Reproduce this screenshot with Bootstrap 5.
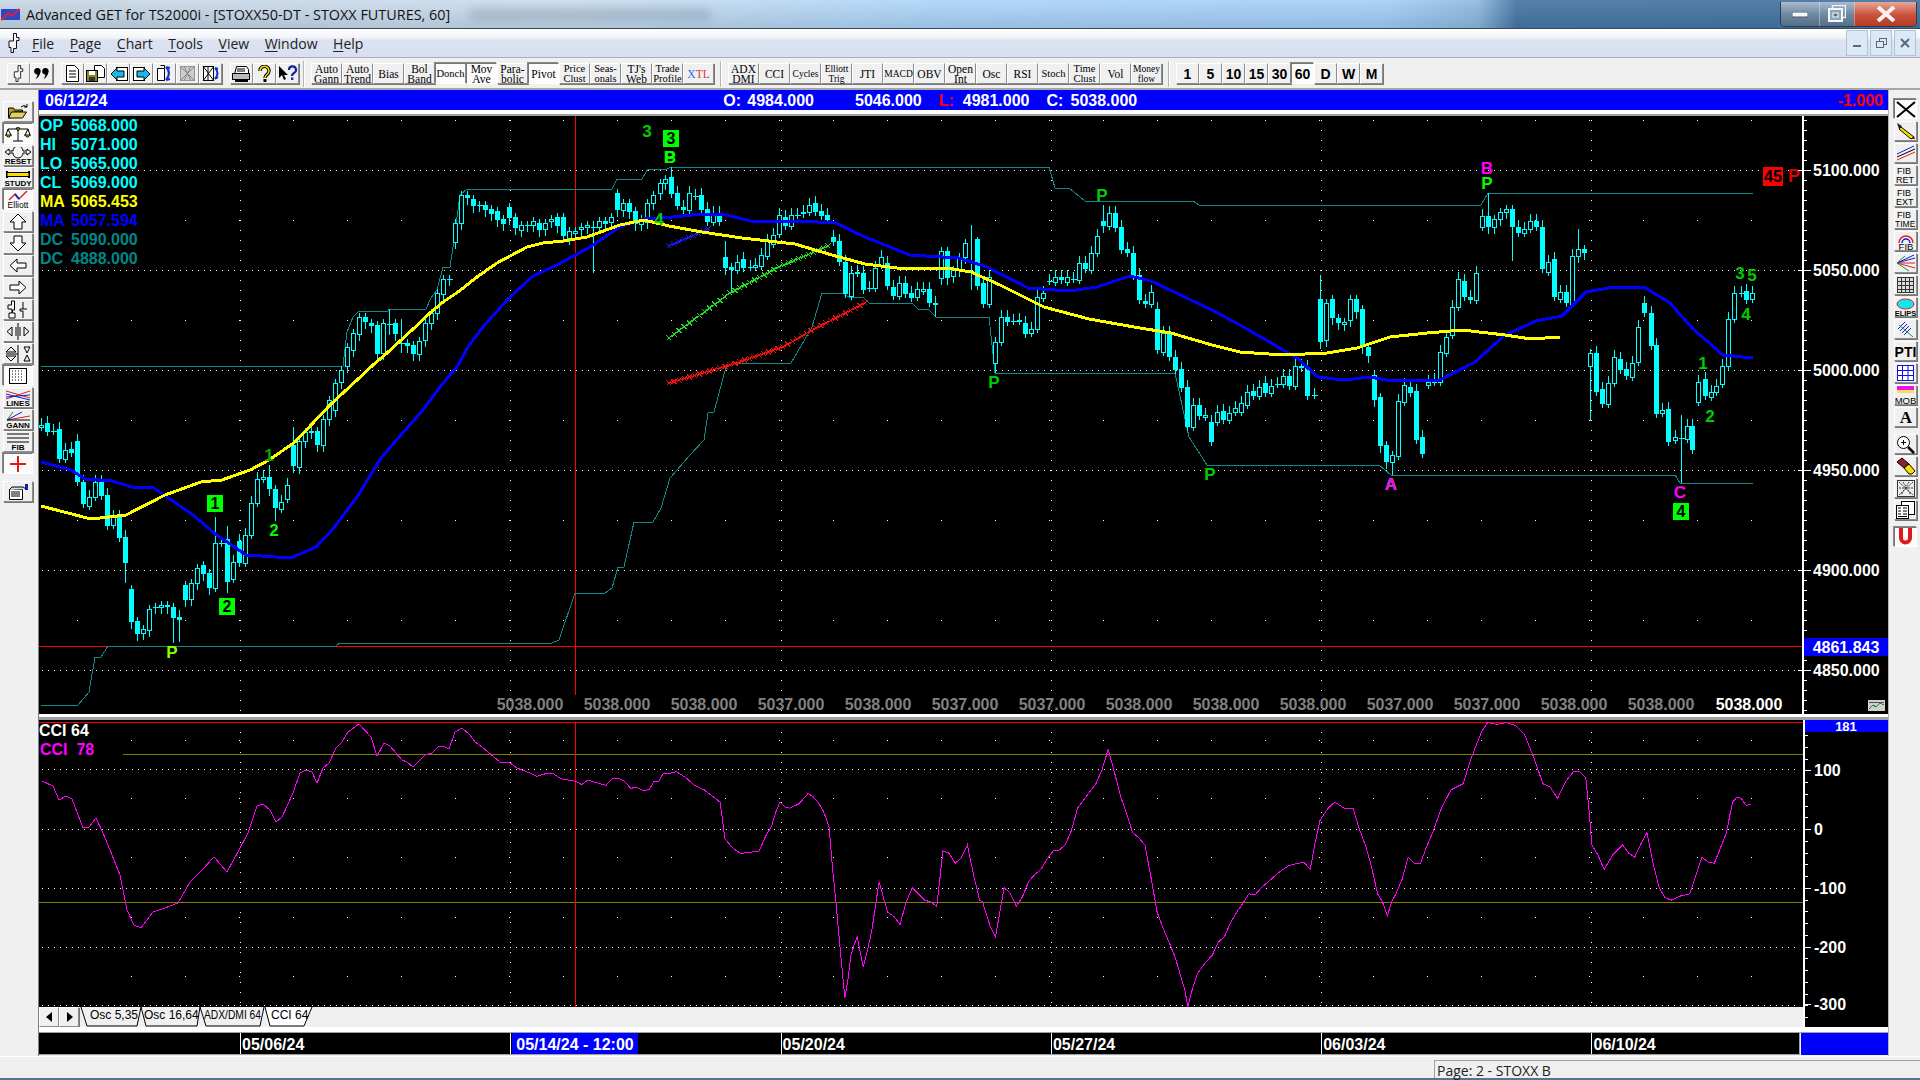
<!DOCTYPE html>
<html lang="en">
<head>
<meta charset="UTF-8">
<title>Advanced GET for TS2000i</title>
<link href="https://cdn.jsdelivr.net/npm/bootstrap@5.3.0/dist/css/bootstrap.min.css" rel="stylesheet">
<style>
  html, body { margin: 0; height: 100%; overflow: hidden; background: #f0f0f0; }
  .app { width: 1920px; height: 1080px; font-family: "Liberation Sans", Arial, sans-serif; overflow: hidden; }
  svg text { font-family: "Liberation Sans", Arial, sans-serif; font-weight: 700; }
  svg text.serif { font-family: "Liberation Serif", serif; }

  /* window title */
  .titlebar { height: 29px; border-bottom: 1px solid #3c4650; color: #111; font: 14.4px "Open Sans", sans-serif;
    background: linear-gradient(180deg, rgba(255,255,255,.12), rgba(60,90,120,.16)),
      linear-gradient(90deg, #c6d5e3 0, #c9dbeb 30%, #a9d2f8 50%, #a2cdf6 72%, #8ab5dc 77%, #3f6f9f 79%, #3c6c9c 100%); }
  .titlebar .logo { margin: 0 6px 0 1px; }
  .ghost { width: 240px; height: 11px; margin-left: 20px; background: rgba(70,90,110,.22); filter: blur(5px); }
  .winbtns { margin-right: 3px; height: 25px; border: 1px solid rgba(30,40,50,.7); border-top: 0; border-radius: 0 0 5px 5px; overflow: hidden; }
  .winbtns div { height: 100%; border-left: 1px solid rgba(255,255,255,.35); background: linear-gradient(180deg, #a9bccd, #6f8aa3 50%, #566f87); }
  .winbtns .b-min { width: 38px; border-left: 0; }
  .winbtns .b-max { width: 35px; }
  .winbtns .b-close { width: 62px; background: linear-gradient(180deg, #e9a795, #c9503a 55%, #b63b28); }

  /* menu */
  .menubar { height: 29px; border-bottom: 1px solid #a9adb8; background: linear-gradient(180deg, #fff 0, #f2f4f9 30%, #dde3f1 40%, #d8dff0 100%); }
  .menubar .nav-link { color: #222; padding: 0; margin-right: 15.5px; font: 14px "Open Sans", sans-serif; }
  .menubar u { text-underline-offset: 2px; }
  .mdi { width: 22px; height: 26px; margin-left: 2px; border: 1px solid #aec3d6; background: #dbe8f5; color: #4a5a6a; }

  /* toolbars */
  .toolbar { height: 32px; padding: 5px 0 0 7px; background: #f0f0f0; border-bottom: 2px solid #a6a6a6; }
  .btn.tb { padding: 0; border-radius: 0; color: #000; background: #f0f0f0; display: flex; align-items: center; justify-content: center;
    border: 1px solid; border-color: #fff #8c8c8c #8c8c8c #fff; box-shadow: 1px 1px 0 #777; }
  .btn.tb.on { background: #fbfbfb; border-color: #777 #fff #fff #777; box-shadow: -1px -1px 0 #888; }
  .tb-i { width: 23px; height: 21px; }
  .btn.tb-t { width: 31px; height: 21px; font: 11.5px/10.5px "Liberation Serif", serif; padding-top: 1px; }
  .btn.tb-t.small { font-size: 9.5px; }
  .btn.tb-t.mid { font-size: 10.500px; }
  .tb-n { width: 23px; height: 21px; font: 700 14px "Liberation Sans", sans-serif; }
  .tb-sep { width: 2px; height: 26px; margin: -2px 6px 0; border-left: 1px solid #b5b5b5; border-right: 1px solid #fff; }

  /* side bars */
  .main { height: 966px; }
  .side-l { width: 38px; padding: 11px 0 0 3px; }
  .side-l .tb { width: 30px; height: 21px; margin-bottom: 1px; }
  .side-r { width: 31px; padding: 9px 0 0 5px; }
  .side-r .tb { width: 23px; height: 20px; margin-bottom: 2px; }
  .side-l .mt-gap { margin-top: 6px; }
  .side-r .mt-gap { margin-top: 5px; }

  /* centre */
  .centre { width: 1851px; border-left: 1px solid #808080; border-right: 1px solid #b5b5b5; }
  .pricebar { height: 20px; background: #00f; color: #fff; font-weight: 700; font-size: 16px; line-height: 21px; padding: 0 5px 0 6px; }
  .pricebar .ohlc { margin-left: 616px; gap: 17px; }
  .pricebar .lab { display: inline-block; width: 24px; }
  .pricebar .lab-h { color: #00f; }
  .pricebar .lab-l, .pricebar .chg { color: #f00; }
  .sep-price { height: 6px; background: #fff; border-bottom: 2px solid #a0a0a0; }
  .sep-panel { height: 6px; background: #fff; border-bottom: 3px solid #a0a0a0; }
  .chart { display: block; background: #000; }
  .tabstrip { height: 20px; background: #f0f0f0; }
  .tabstrip .btn.tb { width: 20px; height: 20px; font-size: 9px; }
  .sep-dates { height: 6px; background: #fff; border-bottom: 1px solid #a0a0a0; }
  .dates { height: 22px; line-height: 24px; font-size: 16px; font-weight: 700; color: #fff; }
  .dates .track { width: 1761px; height: 22px; background: #000; border: 1px solid #a0a0a0; border-width: 0 1px 1px 0; padding-left: 201px; overflow: hidden; }
  .dates .cell { flex: 0 0 270.3px; border-left: 1px solid #fff; padding-left: 1px; }
  .dates .cell:last-child { flex: 1 1 0; }
  .dates .hl { background: #00f; padding: 0 4px; display: inline-block; height: 21px; line-height: 24px; }
  .dates .end { flex: 1; margin-left: 1px; background: #00f; }

  /* status */
  .statusbar { height: 24px; border-top: 1px solid #fff; border-bottom: 2px solid #55748f; }
  .statusbar .panel { margin: 3px 0 0 1434px; padding-left: 2px; flex: 1; border: 1px solid #a0a0a0; border-width: 1px 0 0 1px; font: 14px/20px "Open Sans", sans-serif; color: #222; }
</style>
</head>
<body>
<svg width="0" height="0" class="position-absolute">
  <symbol id="fork" viewBox="0 0 12 20"><path d="M5.5.5h3v4h2.5v3H8.500v8h-3v4H3v-5H1V8h4.500z" fill="#f4f4f4" stroke="#111"/></symbol>
</svg>
<div class="app d-flex flex-column">

  <!-- title -->
  <div class="titlebar d-flex align-items-center">
    <svg class="logo" width="19" height="15" viewBox="0 0 19 15"><rect y="2" width="19" height="11" fill="#2a48c8"/><path d="M0 13 7 6l4 3 7-7" fill="none" stroke="#e02030" stroke-width="2"/></svg>
    <span>Advanced GET for TS2000i - [STOXX50-DT - STOXX FUTURES, 60]</span>
    <div class="ghost"></div>
    <div class="winbtns d-flex ms-auto">
      <div class="b-min d-flex align-items-end justify-content-center pb-2"><svg width="16" height="6"><rect width="16" height="5" fill="#f4f6f8" stroke="#4a5a6a"/></svg></div>
      <div class="b-max d-flex align-items-center justify-content-center"><svg width="18" height="17"><rect x="4.500" y=".5" width="13" height="12" fill="none" stroke="#eef2f5" stroke-width="1.500"/><rect x="1" y="4" width="13" height="12" fill="#8ea4b8" stroke="#f4f6f8" stroke-width="2"/><rect x="5" y="8" width="5" height="4" fill="#5a7288" stroke="#fff"/></svg></div>
      <div class="b-close d-flex align-items-center justify-content-center"><svg width="20" height="16"><path d="M2 1l16 14M18 1 2 15" stroke="#f7f3f0" stroke-width="4"/></svg></div>
    </div>
  </div>

  <!-- menu -->
  <nav class="menubar d-flex align-items-center">
    <svg class="mx-2" width="12" height="20"><use href="#fork"/></svg>
    <ul class="nav ms-1">
      <li class="nav-item"><a class="nav-link" href="#"><u>F</u>ile</a></li>
      <li class="nav-item"><a class="nav-link" href="#"><u>P</u>age</a></li>
      <li class="nav-item"><a class="nav-link" href="#"><u>C</u>hart</a></li>
      <li class="nav-item"><a class="nav-link" href="#"><u>T</u>ools</a></li>
      <li class="nav-item"><a class="nav-link" href="#"><u>V</u>iew</a></li>
      <li class="nav-item"><a class="nav-link" href="#"><u>W</u>indow</a></li>
      <li class="nav-item"><a class="nav-link" href="#"><u>H</u>elp</a></li>
    </ul>
    <div class="d-flex ms-auto me-1 pe-0">
      <div class="mdi d-flex align-items-center justify-content-center"><svg width="9" height="9"><rect y="6" width="8" height="2" fill="#5a6a7a"/></svg></div>
      <div class="mdi d-flex align-items-center justify-content-center"><svg width="11" height="11"><rect x="3.500" y=".5" width="7" height="6" fill="none" stroke="#5a6a7a"/><rect x=".5" y="3.500" width="7" height="6" fill="#dbe8f5" stroke="#5a6a7a"/></svg></div>
      <div class="mdi d-flex align-items-center justify-content-center"><svg width="10" height="10"><path d="M1 1l8 8M9 1 1 9" stroke="#5a6a7a" stroke-width="2"/></svg></div>
    </div>
  </nav>

  <!-- main toolbar -->
  <div class="toolbar d-flex align-items-start">
    <button class="btn tb tb-i"><svg width="11" height="17"><use href="#fork"/></svg></button>
    <button class="btn tb tb-i me-2"><svg width="16" height="13" viewBox="0 0 16 13"><path d="M4 1a3 3 0 0 1 2.500 4C6 8 4 11 1.500 12 3.500 9 3.500 8 3 7.500A3 3 0 0 1 4 1zM12 1a3 3 0 0 1 2.500 4c-.5 3-2.500 6-5 7 2-3 2-4 1.500-4.500A3 3 0 0 1 12 1z"/></svg></button>
    <button class="btn tb tb-i"><svg width="13" height="17"><path d="M.5.5h8l4 4v12H.5z" fill="#fff" stroke="#000"/><path d="M3 6h7M3 9h7M3 12h7" stroke="#000"/></svg></button>
    <button class="btn tb tb-i"><svg width="19" height="17"><path d="M8.500.5h7l3 3v9h-10z" fill="#fff" stroke="#000"/><rect x=".5" y="5.500" width="11" height="11" fill="#8a8a20" stroke="#000"/><rect x="3" y="6" width="6" height="4" fill="#fff"/><rect x="3" y="12" width="6" height="4" fill="#333"/></svg></button>
    <button class="btn tb tb-i"><svg width="18" height="16"><rect x="6.500" y="1.500" width="11" height="13" fill="#fff" stroke="#000"/><path d="M1 8l6-6v3h7v6H7v3z" fill="#18b8e8" stroke="#000"/></svg></button>
    <button class="btn tb tb-i"><svg width="18" height="16"><rect x=".5" y="1.500" width="11" height="13" fill="#fff" stroke="#000"/><path d="M17 8l-6-6v3H4v6h7v3z" fill="#18b8e8" stroke="#000"/></svg></button>
    <button class="btn tb tb-i"><svg width="18" height="17"><path d="M1.500 3.500h7v12h-7z" fill="#fff" stroke="#000"/><path d="M4.500.5h4v3" fill="none" stroke="#000"/><path d="M10 2q6 6 0 13M10 15l4-1M10 2l4 1" fill="none" stroke="#1030d0" stroke-width="2"/></svg></button>
    <button class="btn tb tb-i"><svg width="17" height="17"><rect x="1.500" y="1.500" width="14" height="14" fill="#ccc" stroke="#999"/><path d="M1 1l15 15M16 1 1 16M5 1l7 15M12 1 5 16" stroke="#888"/></svg></button>
    <button class="btn tb tb-i me-2"><svg width="18" height="17"><rect x="1.500" y="1.500" width="10" height="14" fill="#fff" stroke="#000"/><path d="M1 1l11 15M12 1 1 16M6 1v15" stroke="#000"/><path d="M13 3q5 5 0 11M13 14l3-2M13 3l3 1" fill="none" stroke="#1030d0" stroke-width="2"/></svg></button>
    <button class="btn tb tb-i"><svg width="19" height="17"><path d="M4.500 1.500h10l2 3v5h-14z" fill="#fff" stroke="#000"/><rect x=".5" y="8.500" width="17" height="6" fill="#bbb" stroke="#000"/><path d="M5 4h8M5 6h8" stroke="#000"/><path d="M3 16h13" stroke="#000" stroke-width="2"/></svg></button>
    <button class="btn tb tb-i"><svg width="13" height="17" viewBox="0 0 13 17"><path d="M2 6a4.500 4.500 0 1 1 7 3.500C7.500 10.500 7 11 7 13" fill="none" stroke="#000" stroke-width="3.400"/><path d="M2 6a4.500 4.500 0 1 1 7 3.500C7.500 10.500 7 11 7 13" fill="none" stroke="#f0e000" stroke-width="1.500"/><rect x="5.500" y="14" width="3" height="3"/></svg></button>
    <button class="btn tb tb-i"><svg width="20" height="17" viewBox="0 0 20 17"><path d="M1 1v12l3-3 2 5 2-1-2-4h4z"/><path d="M11 5a3.500 3.500 0 1 1 5 3c-1.500.8-2 1.300-2 3" fill="none" stroke="#1020a0" stroke-width="2.200"/><rect x="13" y="12.500" width="2.400" height="2.400" fill="#1020a0"/></svg></button>
    <div class="tb-sep ms-1"></div>
    <button class="btn tb tb-t">Auto<br>Gann</button>
    <button class="btn tb tb-t">Auto<br>Trend</button>
    <button class="btn tb tb-t">Bias</button>
    <button class="btn tb tb-t">Bol<br>Band</button>
    <button class="btn tb tb-t on mid">Donch</button>
    <button class="btn tb tb-t on">Mov<br>Ave</button>
    <button class="btn tb tb-t">Para-<br>bolic</button>
    <button class="btn tb tb-t on">Pivot</button>
    <button class="btn tb tb-t mid">Price<br>Clust</button>
    <button class="btn tb tb-t mid">Seas-<br>onals</button>
    <button class="btn tb tb-t">TJ's<br>Web</button>
    <button class="btn tb tb-t mid">Trade<br>Profile</button>
    <button class="btn tb tb-t"><span class="text-primary">X</span><span class="text-danger">TL</span></button>
    <div class="tb-sep"></div>
    <button class="btn tb tb-t">ADX<br>DMI</button>
    <button class="btn tb tb-t">CCI</button>
    <button class="btn tb tb-t small">Cycles</button>
    <button class="btn tb tb-t small">Elliott<br>Trig</button>
    <button class="btn tb tb-t">JTI</button>
    <button class="btn tb tb-t small">MACD</button>
    <button class="btn tb tb-t">OBV</button>
    <button class="btn tb tb-t">Open<br>Int</button>
    <button class="btn tb tb-t">Osc</button>
    <button class="btn tb tb-t">RSI</button>
    <button class="btn tb tb-t mid">Stoch</button>
    <button class="btn tb tb-t mid">Time<br>Clust</button>
    <button class="btn tb tb-t">Vol</button>
    <button class="btn tb tb-t small">Money<br>flow</button>
    <div class="tb-sep"></div>
    <button class="btn tb tb-n">1</button>
    <button class="btn tb tb-n">5</button>
    <button class="btn tb tb-n">10</button>
    <button class="btn tb tb-n">15</button>
    <button class="btn tb tb-n">30</button>
    <button class="btn tb tb-n on">60</button>
    <button class="btn tb tb-n">D</button>
    <button class="btn tb tb-n">W</button>
    <button class="btn tb tb-n">M</button>
  </div>

  <div class="main d-flex">
    <!-- left tools -->
    <div class="side-l d-flex flex-column">
      <button class="btn tb"><svg width="24" height="17"><path d="M2.500 15V5h5l1 2h8v2H8l-3 6z" fill="#b8a030" stroke="#000"/><path d="M2.500 15l3-6h15l-4 6z" fill="#e4d060" stroke="#000"/><path d="M15 4q3-3 6 0M21 1v3h-3" fill="none" stroke="#000"/></svg></button>
      <button class="btn tb on"><svg width="26" height="18"><path d="M13 2v14M8 16h10M3 4h20M3 4 1 10M3 4l3 6M23 4l-3 6M23 4l2 6" fill="none" stroke="#000"/><path d="M.5 10h6q-3 4-6 0zM19.500 10h6q-3 4-6 0zM11 3h4l-2 3z" fill="#f4e000" stroke="#000"/></svg></button>
      <button class="btn tb"><svg width="28" height="18"><path d="M1 5l4-3v2h4a2 2 0 0 1 10 0h4V2l4 3-4 3V6h-4a2 2 0 0 1-10 0H5v2z" fill="#f4f4f4" stroke="#000"/><text x="14" y="17" font-size="8" text-anchor="middle">RESET</text></svg></button>
      <button class="btn tb"><svg width="28" height="18"><path d="M3 2v7M25 2v7" stroke="#000" stroke-width="2"/><rect x="3" y="3.500" width="22" height="4" fill="#f4e000" stroke="#000"/><text x="14" y="17" font-size="8" text-anchor="middle">STUDY</text></svg></button>
      <button class="btn tb on"><svg width="28" height="19"><path d="M5 10 11 4l4 5 8-8" fill="none" stroke="#e02020" stroke-width="1.500"/><path d="M11 4l4 5" stroke="#1020d0" stroke-width="2"/><text class="fw-normal" x="14" y="18" font-size="8.500" text-anchor="middle">Elliott</text></svg></button>
      <button class="btn tb"><svg width="18" height="17"><path d="M9 1l8 8h-4v7H5V9H1z" fill="#fafafa" stroke="#000"/></svg></button>
      <button class="btn tb"><svg width="18" height="17"><path d="M9 16 1 8h4V1h8v7h4z" fill="#fafafa" stroke="#000"/></svg></button>
      <button class="btn tb"><svg width="18" height="15"><path d="M1 7.500 8 1v4h9v5H8v4z" fill="#fafafa" stroke="#000"/></svg></button>
      <button class="btn tb"><svg width="18" height="15"><path d="M17 7.500 10 1v4H1v5h9v4z" fill="#fafafa" stroke="#000"/></svg></button>
      <button class="btn tb"><svg width="26" height="19"><path d="M6.500 1h3v9h-2v3H10v5H4v-5h3V9H3V5h3.500zM18 2v7h-3v2h3v7M22 9h-4" fill="#fafafa" stroke="#000"/></svg></button>
      <button class="btn tb"><svg width="26" height="17"><path d="M13 0v17" stroke="#000"/><path d="M2 8.500 7 4v9zM11 4v9M24 8.500 19 4v9zM15 4v9" fill="#eee" stroke="#000"/></svg></button>
      <button class="btn tb"><svg width="26" height="18"><path d="M13 0v18M1 9h12" stroke="#000"/><path d="M6 2l-5 5h10zM6 16l-5-5h10zM19 2h6l-3 6zM19 16h6l-3-6z" fill="#eee" stroke="#000"/></svg></button>
      <button class="btn tb on"><svg width="18" height="16"><rect x=".5" y=".5" width="17" height="15" fill="#fff" stroke="#000"/><path d="M3 3h12M3 6h12M3 9h12M3 12h12" stroke="#000" stroke-dasharray="1 2"/></svg></button>
      <button class="btn tb"><svg width="28" height="19"><path d="M2 3l24 7M2 11 26 3" stroke="#e02020"/><path d="M2 6l24 6M2 9l24-2" stroke="#1020d0"/><text x="14" y="18" font-size="8" text-anchor="middle">LINES</text></svg></button>
      <button class="btn tb"><svg width="28" height="19"><path d="M3 10 26 6" stroke="#e02020"/><path d="M3 10 18 2" stroke="#1020d0"/><path d="M3 10 9 2" stroke="#209030"/><path d="M3 10h23" stroke="#000"/><text x="14" y="18" font-size="8" text-anchor="middle">GANN</text></svg></button>
      <button class="btn tb"><svg width="28" height="19"><path d="M3 2h22M3 6h22M3 10h22" stroke="#000"/><text x="14" y="18" font-size="8" text-anchor="middle">FIB</text></svg></button>
      <button class="btn tb on"><svg width="18" height="16"><path d="M9 0v16M1 8h16" stroke="#e8181c" stroke-width="2"/></svg></button>
      <button class="btn tb mt-gap"><svg width="24" height="18"><path d="M3.500 6.500h13v10h-13z" fill="#fff" stroke="#000"/><path d="M5 9h9M5 11h9M5 13h9" stroke="#000"/><path d="M3 7l3-3h11l3 2" fill="#ddd" stroke="#000"/><rect x="19" y="1" width="3" height="6" fill="#1020a0"/></svg></button>
    </div>

    <!-- chart column -->
    <div class="centre d-flex flex-column">
      <div class="pricebar d-flex">
        <span>06/12/24</span>
        <div class="ohlc d-flex">
          <span><span class="lab">O:</span>4984.000</span>
          <span><span class="lab lab-h">H:</span>5046.000</span>
          <span><span class="lab lab-l">L:</span>4981.000</span>
          <span><span class="lab">C:</span>5038.000</span>
        </div>
        <span class="chg ms-auto">-1.000</span>
      </div>
      <div class="sep-price"></div>
      <svg id="price" class="chart" width="1849" height="598" viewBox="39 116 1849 598"></svg>
      <div class="sep-panel"></div>
      <div class="d-flex">
        <div>
          <svg id="cci" class="chart" width="1764" height="287" viewBox="39 720 1764 287"></svg>
          <div class="tabstrip d-flex">
            <button class="btn tb"><svg width="7" height="10"><path d="M6 0v10L0 5z"/></svg></button>
            <button class="btn tb"><svg width="7" height="10"><path d="M1 0v10l6-5z"/></svg></button>
            <svg width="240" height="20" viewBox="80 1007 240 20">
              <g fill="#f0f0f0" stroke="#000">
                <path d="M82 1007l6 19h50l4-19M142 1007l5 19h51l3-19M201 1007l6 19h54l4-19"/>
                <path d="M266 1007l5 19h34l8-19" fill="#fff"/>
              </g>
              <g font-size="12">
                <text class="fw-normal" x="91" y="1019">Osc 5,35</text>
                <text class="fw-normal" x="145" y="1019">Osc 16,64</text>
                <text class="fw-normal" x="205" y="1019" textLength="57" lengthAdjust="spacingAndGlyphs">ADX/DMI 64</text>
                <text class="fw-normal" x="272" y="1019">CCI 64</text>
              </g>
            </svg>
          </div>
        </div>
        <svg id="cciAxis" class="chart" width="85" height="307" viewBox="1803 720 85 307"></svg>
      </div>
      <div class="sep-dates"></div>
      <div class="dates d-flex">
        <div class="track d-flex">
          <div class="cell">05/06/24</div>
          <div class="cell"><span class="hl">05/14/24 - 12:00</span></div>
          <div class="cell">05/20/24</div>
          <div class="cell">05/27/24</div>
          <div class="cell">06/03/24</div>
          <div class="cell">06/10/24</div>
        </div>
        <div class="end"></div>
      </div>
    </div>

    <!-- right tools -->
    <div class="side-r d-flex flex-column">
      <button class="btn tb on"><svg width="20" height="17"><path d="M1 1l18 15M19 1 1 16" stroke="#000" stroke-width="2"/></svg></button>
      <button class="btn tb"><svg width="20" height="18"><path d="M5 5l13 10-3 2L3 7z" fill="#f4e000" stroke="#000"/><path d="M1 1l5 3-3 3z" fill="#222"/><path d="M15 17l3-3 1 3z" fill="#801010"/></svg></button>
      <button class="btn tb"><svg width="20" height="16"><path d="M1 9 18 1" stroke="#1020d0"/><path d="M1 12 19 4" stroke="#000"/><path d="M1 15 19 7" stroke="#e02020"/></svg></button>
      <button class="btn tb"><svg width="21" height="18"><text class="fw-normal" x="2" y="8" font-size="9">FIB</text><text class="fw-normal" x="1" y="17" font-size="9">RET</text></svg></button>
      <button class="btn tb"><svg width="21" height="18"><text class="fw-normal" x="2" y="8" font-size="9">FIB</text><text class="fw-normal" x="1" y="17" font-size="9">EXT</text></svg></button>
      <button class="btn tb"><svg width="21" height="18"><text class="fw-normal" x="2" y="8" font-size="9">FIB</text><text class="fw-normal" x="0" y="17" font-size="8.500">TIME</text></svg></button>
      <button class="btn tb"><svg width="20" height="19"><path d="M3 11a7 7 0 0 1 14 0" fill="none" stroke="#e02020" stroke-width="1.500"/><path d="M6 11a4 4 0 0 1 8 0" fill="none" stroke="#1020d0" stroke-width="1.500"/><text class="fw-normal" x="10" y="18" font-size="9.500" text-anchor="middle">FIB</text></svg></button>
      <button class="btn tb"><svg width="20" height="18"><path d="M1 9 18 1M1 9 19 4" stroke="#1020d0"/><path d="M1 9h18M1 9l18 5" stroke="#e02020"/><path d="M1 9l12 8" stroke="#209030"/><path d="M1 9 9 2" stroke="#209030"/></svg></button>
      <button class="btn tb"><svg width="17" height="16"><rect x=".5" y=".5" width="16" height="15" fill="#ddd" stroke="#333"/><path d="M4.500 1v14M8.500 1v14M12.500 1v14M1 4.500h15M1 8.500h15M1 12.500h15" stroke="#333"/></svg></button>
      <button class="btn tb"><svg width="21" height="19"><ellipse cx="10.500" cy="6" rx="8.500" ry="5" fill="#10e8f0" stroke="#e02020"/><text x="10.500" y="18" font-size="7.500" text-anchor="middle">ELIPS</text></svg></button>
      <button class="btn tb"><svg width="19" height="18"><path d="M2 9l7-7M4 11l7-7M6 13l7-7M8 15l7-7" stroke="#1020d0"/><path d="M3 5l14 12" stroke="#209030"/></svg></button>
      <button class="btn tb"><svg width="21" height="16"><text x="10.500" y="14" font-size="14" text-anchor="middle">PTI</text></svg></button>
      <button class="btn tb"><svg width="17" height="16"><rect x=".5" y=".5" width="16" height="15" fill="#fff" stroke="#1010e0"/><path d="M5.500 1v14M11 1v14M1 5.500h15M1 10.500h15" stroke="#1010e0"/></svg></button>
      <button class="btn tb"><svg width="21" height="19"><rect x="2" y="0" width="17" height="4" fill="#f010e0"/><rect x="2" y="4" width="17" height="3" fill="#f4e060"/><text class="fw-normal" x="10.500" y="18" font-size="9.500" text-anchor="middle">MOB</text></svg></button>
      <button class="btn tb"><svg width="20" height="18"><text class="serif" x="10" y="15" font-size="17" text-anchor="middle">A</text></svg></button>
      <button class="btn tb mt-gap"><svg width="19" height="19"><circle cx="7.500" cy="7.500" r="6" fill="#fff" stroke="#000"/><path d="M5 7.500h5M7.500 5v5" stroke="#000"/><path d="M12 12l6 6" stroke="#000" stroke-width="2.500"/></svg></button>
      <button class="btn tb"><svg width="20" height="18"><path d="M1 5l5-4 7 6-5 4z" fill="#8a2030" stroke="#000"/><path d="M8 11l5-4 6 7-3 3h-3z" fill="#f4e000" stroke="#000"/></svg></button>
      <button class="btn tb"><svg width="18" height="17"><rect x=".5" y=".5" width="17" height="16" fill="#eee" stroke="#333"/><path d="M2 2l14 13M16 2 2 15M6 2l8 13M12 2 4 15M2 8h14" stroke="#333" stroke-dasharray="2 1"/></svg></button>
      <button class="btn tb"><svg width="19" height="18"><rect x="5.500" y=".5" width="13" height="13" fill="#fff" stroke="#000"/><rect x=".5" y="4.500" width="12" height="13" fill="#fff" stroke="#000"/><path d="M2 7h3M7 7h4M2 10h3M7 10h4M2 13h3M7 13h4M2 15.500h9" stroke="#000"/></svg></button>
      <button class="btn tb on mt-gap"><svg width="17" height="18"><path d="M2 0h4v10a2.500 2.500 0 0 0 5 0V0h4v10a6.500 6.500 0 0 1-13 0z" fill="#e01818"/></svg></button>
    </div>
  </div>

  <!-- status -->
  <div class="statusbar d-flex">
    <div class="panel">Page: 2 - STOXX B</div>
  </div>
</div>

<script src="https://cdn.jsdelivr.net/npm/bootstrap@5.3.0/dist/js/bootstrap.bundle.min.js"></script>
<script>
  // x, body top, body bottom, filled
  const candles = [
    [41,425,427],[47,423,432,1],[53,431,431],[59,429,459,1],[65,450,459],[71,449,453,1],[77,441,482,1],[83,482,504,1],[89,497,506],[95,482,497],[101,482,496,1],
    [107,495,526,1],[113,517,525],[119,517,538,1],[125,537,563,1],[131,589,622,1],[137,621,634,1],[143,629,633],[149,609,630],[155,607,607],[161,605,607],[167,605,607,1],
    [173,607,618,1],[179,617,620,1],[185,585,600,1],[191,583,599],[197,568,583],[203,565,574,1],[209,573,588,1],[215,543,588],[221,543,543],[227,539,582,1],[233,562,579],
    [239,541,563,1],[245,535,563],[251,503,535],[257,479,503],[263,477,479],[269,477,489,1],[275,489,508,1],[281,502,509],[287,485,499],[293,445,466,1],[299,441,467],
    [305,432,441],[311,431,432],[317,431,445,1],[323,419,445],[329,400,419],[335,383,410],[341,370,382],[347,347,366],[353,333,350],[359,317,334],[365,317,322,1],
    [371,323,326,1],[377,325,354,1],[383,323,353],[389,324,324],[395,323,334,1],[401,343,343],[407,343,346,1],[413,345,354,1],[419,341,354],[425,323,340],[431,313,323],
    [437,293,313],[443,279,294],[449,279,279],[455,223,242],[461,195,223],[467,195,198,1],[473,199,206,1],[479,205,205],[485,205,210,1],[491,209,214,1],[497,211,220,1],
    [503,219,224,1],[509,207,218,1],[515,217,228,1],[521,225,230],[527,225,225],[533,221,225],[539,223,230,1],[545,223,229],[551,219,221],[557,217,226,1],[563,217,236,1],
    [569,231,238],[575,231,233],[581,227,229],[587,225,227],[593,227,227],[599,221,227],[605,221,224,1],[611,217,222],[617,193,210,1],[623,203,210],[629,203,212,1],
    [635,211,224,1],[641,219,224],[647,203,222],[653,195,203],[660,183,193],[665,179,183],[671,177,194,1],[677,193,206,1],[683,207,210,1],[689,193,210],[695,196,196],
    [701,195,210,1],[707,209,222,1],[713,213,222],[719,213,222,1],[725,257,268,1],[731,267,270,1],[737,262,270],[743,259,268,1],[750,267,267],[755,265,267],[761,255,266],
    [767,241,256],[773,235,244],[779,215,234],[785,217,226,1],[791,215,226],[797,215,215],[803,212,214,1],[809,205,212],[815,203,212,1],[821,211,216,1],[827,215,220,1],
    [833,237,242,1],[839,241,262,1],[845,262,294,1],[851,273,296],[857,272,273],[863,273,290,1],[869,288,288],[875,268,288],[881,257,265],[887,263,286,1],[893,287,296,1],
    [899,283,296],[905,283,294,1],[911,293,298,1],[917,289,297],[923,289,291],[929,289,303,1],[935,303,305,1],[941,251,278],[947,251,278,1],[953,270,276],[959,257,270],
    [965,243,257],[971,262,262],[977,239,286,1],[983,283,304,1],[989,277,304],[995,342,363],[1001,317,342],[1007,317,322,1],[1013,321,321],[1019,320,321],[1025,323,334,1],
    [1031,329,333],[1037,297,329],[1043,293,298],[1049,281,281],[1055,277,282],[1061,277,280,1],[1067,277,282],[1073,279,279],[1079,263,280],[1085,263,269,1],[1091,253,270],
    [1097,236,253],[1103,221,226,1],[1109,213,226],[1115,213,228,1],[1121,227,250,1],[1127,249,253,1],[1133,253,276,1],[1139,275,300,1],[1145,301,304,1],[1151,292,304],
    [1157,309,350,1],[1163,333,352],[1169,333,357,1],[1175,357,370,1],[1181,369,388,1],[1187,387,427,1],[1193,405,427],[1199,405,416,1],[1205,415,417],[1211,422,442,1],
    [1217,412,422],[1223,411,420,1],[1229,413,420],[1235,408,412],[1241,403,412],[1247,392,405],[1253,391,396,1],[1259,387,396],[1265,383,393,1],[1271,386,393],[1277,384,384],
    [1283,376,384],[1289,376,386,1],[1295,366,386],[1301,366,368,1],[1307,367,396,1],[1314,395,395],[1320,299,342,1],[1326,303,340],[1332,299,318,1],[1338,318,323,1],
    [1344,322,324],[1350,299,320],[1356,299,312,1],[1362,309,347,1],[1368,347,356,1],[1374,375,400,1],[1380,397,446,1],[1386,445,462,1],[1392,455,462],[1398,401,456],
    [1404,385,402],[1410,387,393,1],[1416,391,440,1],[1422,437,454,1],[1428,382,385],[1434,380,382],[1440,352,382],[1446,337,353],[1452,307,335],[1458,279,307],[1464,281,297,1],
    [1470,297,300,1],[1476,273,300],[1482,216,227],[1488,216,227,1],[1494,219,227],[1500,212,219],[1506,209,212],[1512,209,227,1],[1518,227,233,1],[1524,229,233],[1530,221,229],
    [1536,221,227,1],[1542,227,269,1],[1548,262,272],[1554,259,297,1],[1560,292,299],[1566,292,303,1],[1572,256,304],[1578,249,256],[1584,249,253,1],[1590,353,366],
    [1596,353,392,1],[1602,389,404,1],[1608,383,404],[1614,357,383],[1620,359,370,1],[1626,369,376,1],[1632,363,377],[1638,327,362],[1644,303,313,1],[1651,313,346,1],
    [1656,345,414,1],[1662,410,413],[1668,409,442,1],[1675,437,440],[1681,438,438],[1687,426,439],[1692,426,450,1],[1698,382,402],[1705,379,396,1],[1711,392,397],[1716,386,392],
    [1722,366,384],[1728,319,366],[1734,293,319],[1741,293,293],[1746,291,300,1],[1752,293,299]
  ];
  // long wicks read off the picture: x -> [high, low]
  const wicks = {125:[0,583],173:[0,643],179:[0,642],215:[517,0],227:[526,593],269:[465,0],275:[0,521],293:[427,0],389:[309,335],401:[319,353],593:[221,273],
    648:[169,0],671:[167,0],725:[241,0],731:[0,293],935:[0,317],971:[225,290],977:[237,0],995:[337,373],1103:[205,0],1109:[206,0],1308:[0,421],1320:[275,0],1392:[0,475],
    1488:[193,0],1512:[0,261],1578:[229,0],1590:[0,421],1681:[415,483]};

  const yellow = [[41,506],[91,519],[126,515],[165,495],[201,482],[222,480],[250,470],[269,460],[295,442],[330,405],[357,380],[373,365],[387,353],[412,330],[430,313],[443,302],[458,292],[477,277],[497,263],[527,247],[543,243],[563,241],[587,237],[620,225],[644,220],[669,226],[702,232],[742,238],[795,244],[832,255],[865,264],[897,268],[947,268],[971,272],[1000,285],[1044,307],[1089,319],[1134,327],[1171,333],[1212,345],[1240,352],[1283,355],[1327,353],[1357,348],[1390,337],[1427,333],[1462,330],[1505,335],[1531,339],[1560,337]];
  const blue = [[41,462],[71,470],[85,479],[112,481],[132,487],[154,488],[193,515],[214,533],[246,555],[291,558],[316,547],[332,530],[357,497],[381,458],[401,435],[423,410],[440,387],[457,367],[468,347],[483,327],[507,300],[533,276],[557,265],[590,247],[620,227],[644,219],[673,217],[702,214],[722,214],[755,222],[800,221],[836,223],[865,237],[910,255],[959,258],[987,267],[1028,288],[1069,291],[1097,287],[1130,276],[1151,281],[1212,310],[1240,325],[1266,340],[1297,358],[1318,377],[1344,380],[1370,377],[1392,381],[1440,380],[1475,362],[1505,335],[1536,321],[1562,316],[1586,292],[1614,287],[1644,287],[1670,303],[1692,328],[1723,355],[1753,358]];
  const dcHigh = [[41,366],[343,366],[347,332],[353,317],[359,311],[388,311],[389,309],[426,309],[431,298],[437,290],[443,267],[450,267],[453,247],[460,195],[467,189],[612,189],[617,179],[642,179],[648,169],[667,169],[671,167],[1049,167],[1055,188],[1069,188],[1085,201],[1193,201],[1199,205],[1481,205],[1488,193],[1753,193]];
  const dcLow = [[41,705],[78,705],[89,692],[95,657],[101,657],[108,646],[336,646],[340,643],[552,643],[559,640],[575,593],[605,593],[612,588],[618,567],[624,567],[634,522],[653,522],[661,508],[670,478],[690,455],[704,440],[708,413],[714,412],[726,367],[736,363],[791,363],[812,327],[822,293],[842,293],[849,297],[863,297],[869,303],[912,303],[918,309],[928,309],[936,317],[989,317],[995,373],[1175,373],[1189,437],[1207,465],[1379,465],[1391,475],[1675,475],[1680,483],[1753,483]];

  // small random numbers so the wicks stay the same on each run
  let seed = 11;
  const rnd = n => { seed = (seed * 1103 + 12345) % 65536; return 1 + seed % n; };

  // CCI: the second part was read at a smaller scale, so add the fine jitter it lost
  const cciHead = [[42,781],[53,786],[59,800],[66,796],[72,799],[83,828],[89,827],[96,818],[103,833],[110,850],[120,875],[127,910],[134,925],[141,928],[153,912],[165,908],[178,903],[190,882],[202,870],[214,857],[227,872],[239,850],[248,833],[257,806],[263,804],[270,810],[276,822],[282,817],[293,793],[300,773],[306,770],[312,772],[317,783],[323,768],[329,763],[336,748],[342,742],[348,732],[359,724],[371,737],[377,756],[384,743],[390,746],[402,760],[407,762],[413,767],[425,755],[432,753],[438,747],[443,746],[449,749],[455,732],[462,728],[470,735],[475,742],[482,747],[500,762],[510,763],[517,768]];
  const cciTail = [[432,631],[445,632],[458,636],[470,638],[480,637],[490,640],[500,636],[510,638],[520,643],[530,645],[538,638],[545,632],[560,635],[575,645],[588,655],[592,685],[605,697],[620,695],[630,675],[637,655],[645,660],[660,648],[668,655],[677,675],[683,740],[690,815],[695,780],[700,765],[705,790],[712,760],[718,720],[725,745],[735,755],[745,725],[755,735],[765,740],[770,695],[780,705],[790,690],[800,735],[805,745],[813,765],[820,725],[830,740],[840,720],[850,710],[860,695],[870,690],[880,660],[895,640],[905,612],[915,650],[925,680],[935,690],[945,745],[955,770],[965,800],[970,822],[978,795],[990,780],[1000,765],[1010,745],[1020,730],[1030,725],[1045,712],[1060,705],[1070,710],[1078,670],[1090,655],[1105,660],[1115,690],[1125,730],[1133,748],[1140,730],[1150,700],[1160,705],[1170,680],[1185,645],[1195,640],[1205,610],[1215,590],[1230,590],[1245,600],[1260,640],[1272,652],[1285,630],[1295,635],[1300,690],[1310,710],[1325,690],[1335,700],[1345,680],[1355,725],[1365,735],[1380,730],[1390,700],[1400,705],[1410,680],[1415,655],[1422,652],[1430,657]];
  const cciLine = cciHead.slice();
  cciTail.forEach((p, i) => {
    const x = p[0] * 1.2245, y = p[1] * 1.2245;
    if (i) {
      const q = cciTail[i - 1];
      cciLine.push([(q[0] + p[0]) * .61225, (q[1] + p[1]) * .61225 + rnd(9) - 5]);
    }
    cciLine.push([x, y]);
  });

  const VERT_GRID = [240, 510, 781, 1051, 1321, 1591];
  const pts = a => a.map(p => p.join(',')).join(' ');
  const poly = (a, color, w) => `<polyline points="${pts(a)}" fill="none" stroke="${color}" stroke-width="${w}" shape-rendering="crispEdges"/>`;
  const hline = (x1, x2, y, color, dash) => `<line x1="${x1}" x2="${x2}" y1="${y}" y2="${y}" stroke="${color}" ${dash ? `stroke-dasharray="${dash}"` : ''} shape-rendering="crispEdges"/>`;
  const vline = (x, y1, y2, color, dash) => `<line x1="${x}" x2="${x}" y1="${y1}" y2="${y2}" stroke="${color}" ${dash ? `stroke-dasharray="${dash}"` : ''} shape-rendering="crispEdges"/>`;
  const label = (x, y, str, color, size, anchor) => `<text x="${x}" y="${y}" fill="${color}" font-size="${size || 17}" text-anchor="${anchor || 'middle'}">${str}</text>`;
  const box = (x, y, digit) => `<rect x="${x}" y="${y}" width="16" height="17" fill="#0f0"/>` + label(x + 8, y + 14, digit, '#000', 16);

  function candleSvg(c) {
    const x = Math.round(c[0]) + .5, t = c[1], b = c[2], over = wicks[c[0]] || [0, 0];
    const hi = over[0] || t - rnd(8), lo = over[1] || b + rnd(8);
    let s = vline(x, hi, lo, '#0ff');
    if (t === b) return s + hline(x - 3, x + 3, t + .5, '#0ff');
    if (c[3]) s += `<rect x="${x - 2.5}" y="${t}" width="5" height="${b - t}" fill="#0ff" shape-rendering="crispEdges"/>`;
    else s += `<rect x="${x - 2}" y="${t + .5}" width="4" height="${b - t}" fill="#000" stroke="#0ff" shape-rendering="crispEdges"/>`;
    return s;
  }

  // trend line with a small cross at every step
  function hatched(a, color) {
    let s = poly(a, color, 1);
    for (let i = 1; i < a.length; i++) {
      const [x0, y0] = a[i - 1], [x1, y1] = a[i], n = Math.round((x1 - x0) / 5);
      for (let k = 0; k <= n; k++) {
        const x = x0 + (x1 - x0) * k / n, y = y0 + (y1 - y0) * k / n;
        s += `<path d="M${x - 2.500} ${y - 2.500}l5 5M${x - 2.500} ${y + 2.500}l5-5" stroke="${color}" shape-rendering="crispEdges"/>`;
      }
    }
    return s;
  }

  function drawPrice() {
    let s = '';
    for (let y = 170; y < 700; y += 100) s += hline(42, 1800, y + .5, '#fff', '1 5');
    for (let y = 120; y < 700; y += 100) s += hline(77, 1800, y + .5, '#fff', '1 53');
    VERT_GRID.forEach(x => { s += vline(x + .5, 120, 712, '#fff', '1 9'); });
    s += hline(39, 1802, 646.5, '#f00') + vline(575.5, 116, 695, '#f00');
    s += poly(dcHigh, '#0e8a8a', 1) + poly(dcLow, '#0e8a8a', 1);
    s += candles.map(candleSvg).join('');
    s += hatched([[669,246],[708,229]], '#1a1aff');
    s += hatched([[669,338],[730,293],[779,267],[828,246]], '#22e022');
    s += hatched([[669,383],[730,365],[783,347],[816,328],[865,303]], '#f01010');
    s += poly(blue, '#00f', 3) + poly(yellow, '#ff0', 3);

    // legend
    [['OP','5068.000','#0ff'],['HI','5071.000','#0ff'],['LO','5065.000','#0ff'],['CL','5069.000','#0ff'],['MA','5065.453','#ff0'],['MA','5057.594','#00f'],['DC','5090.000','#088'],['DC','4888.000','#088']]
      .forEach((r, i) => { s += label(40, 131 + i * 19, r[0], r[2], 16, 'start') + label(71, 131 + i * 19, r[1], r[2], 16, 'start'); });

    // wave labels
    s += box(207, 495, 1) + box(219, 598, 2) + box(663, 130, 3) + box(1673, 503, 4);
    [[172,658,'P','#8f0'],[269,461,'1','#0a0'],[274,536,'2','#0f0'],[647,137,'3','#0c0'],[670,163,'B','#0f0'],[670,163,'P','#0f0'],[659,225,'4','#0c0'],
     [1102,201,'P','#0c0'],[994,388,'P','#0c0'],[1210,480,'P','#0c0'],[1487,174,'B','#f0f'],[1487,189,'P','#0f0'],[1391,490,'A','#0f0'],[1391,490,'A','#f0f'],
     [1680,498,'C','#f0f'],[1703,369,'1','#0c0'],[1710,422,'2','#0c0'],[1740,279,'3','#0c0'],[1752,281,'5','#0c0'],[1746,320,'4','#0c0']]
      .forEach(l => { s += label(l[0], l[1], l[2], l[3]); });
    s += `<rect x="1763" y="167" width="20" height="19" fill="#f00"/>` + label(1773, 182, '45', '#000', 16) + label(1794, 182, 'P', '#d00', 18);

    // bottom prices
    ['5038','5038','5038','5037','5038','5037','5037','5038','5038','5038','5037','5037','5038','5038'].forEach((v, i) => {
      s += label(530 + i * 87, 710, v + '.000', '#808080', 16);
    });
    s += label(1749, 710, '5038.000', '#fff', 16);

    // price axis
    s += `<rect x="1802" y="116" width="2" height="598" fill="#fff"/>`;
    for (let y = 120; y < 712; y += 10) s += hline(1802, 1807, y + .5, '#fff');
    [[5100,170],[5050,270],[5000,370],[4950,470],[4900,570],[4850,670]].forEach(a => {
      s += hline(1798, 1811, a[1] + .5, '#fff') + label(1813, a[1] + 6, a[0] + '.000', '#fff', 16, 'start');
    });
    s += `<rect x="1804" y="638" width="84" height="18" fill="#00f"/>` + label(1846, 653, '4861.843', '#fff', 16);
    s += `<g shape-rendering="crispEdges"><rect x="1868" y="700" width="17" height="11" fill="#cfcfcf"/><path d="M1869 709l4-4 3 2 4-4 4 2" fill="none" stroke="#1a8a30"/><path d="M1869 702h15" stroke="#555"/></g>`;
    document.getElementById('price').innerHTML = s;
  }

  function drawCci() {
    let s = '';
    [769, 829, 888, 947, 1005].forEach(y => { s += hline(42, 1800, y + .5, '#fff', '1 5'); });
    [740, 798, 857, 917, 976].forEach(y => { s += hline(131, 1800, y + .5, '#fff', '1 53'); });
    VERT_GRID.forEach(x => { s += vline(x + .5, 722, 1007, '#fff', '1 9'); });
    s += hline(123, 1803, 754.5, '#808000') + hline(39, 1803, 902.5, '#808000');
    s += hline(39, 1803, 722.5, '#f00') + vline(575.5, 722, 1007, '#f00');
    s += poly(cciLine, '#f0f', 1);
    s += label(39, 736, 'CCI 64', '#fff', 16, 'start') + label(40, 755, 'CCI&#160; 78', '#f0f', 16, 'start');
    document.getElementById('cci').innerHTML = s;

    let a = `<rect x="1803" y="720" width="2" height="307" fill="#fff"/>`;
    for (let y = 735; y < 1020; y += 11.75) a += hline(1803, 1808, Math.round(y) + .5, '#fff');
    [[100,770],[0,829],[-100,888],[-200,947],[-300,1004]].forEach(t => {
      a += hline(1803, 1811, t[1] + .5, '#fff') + label(1814, t[1] + 6, t[0], '#fff', 16, 'start');
    });
    a += `<rect x="1805" y="720" width="83" height="12" fill="#00f"/>` + label(1846, 731, '181', '#fff', 13);
    document.getElementById('cciAxis').innerHTML = a;
  }

  drawPrice();
  drawCci();
</script>
</body>
</html>
